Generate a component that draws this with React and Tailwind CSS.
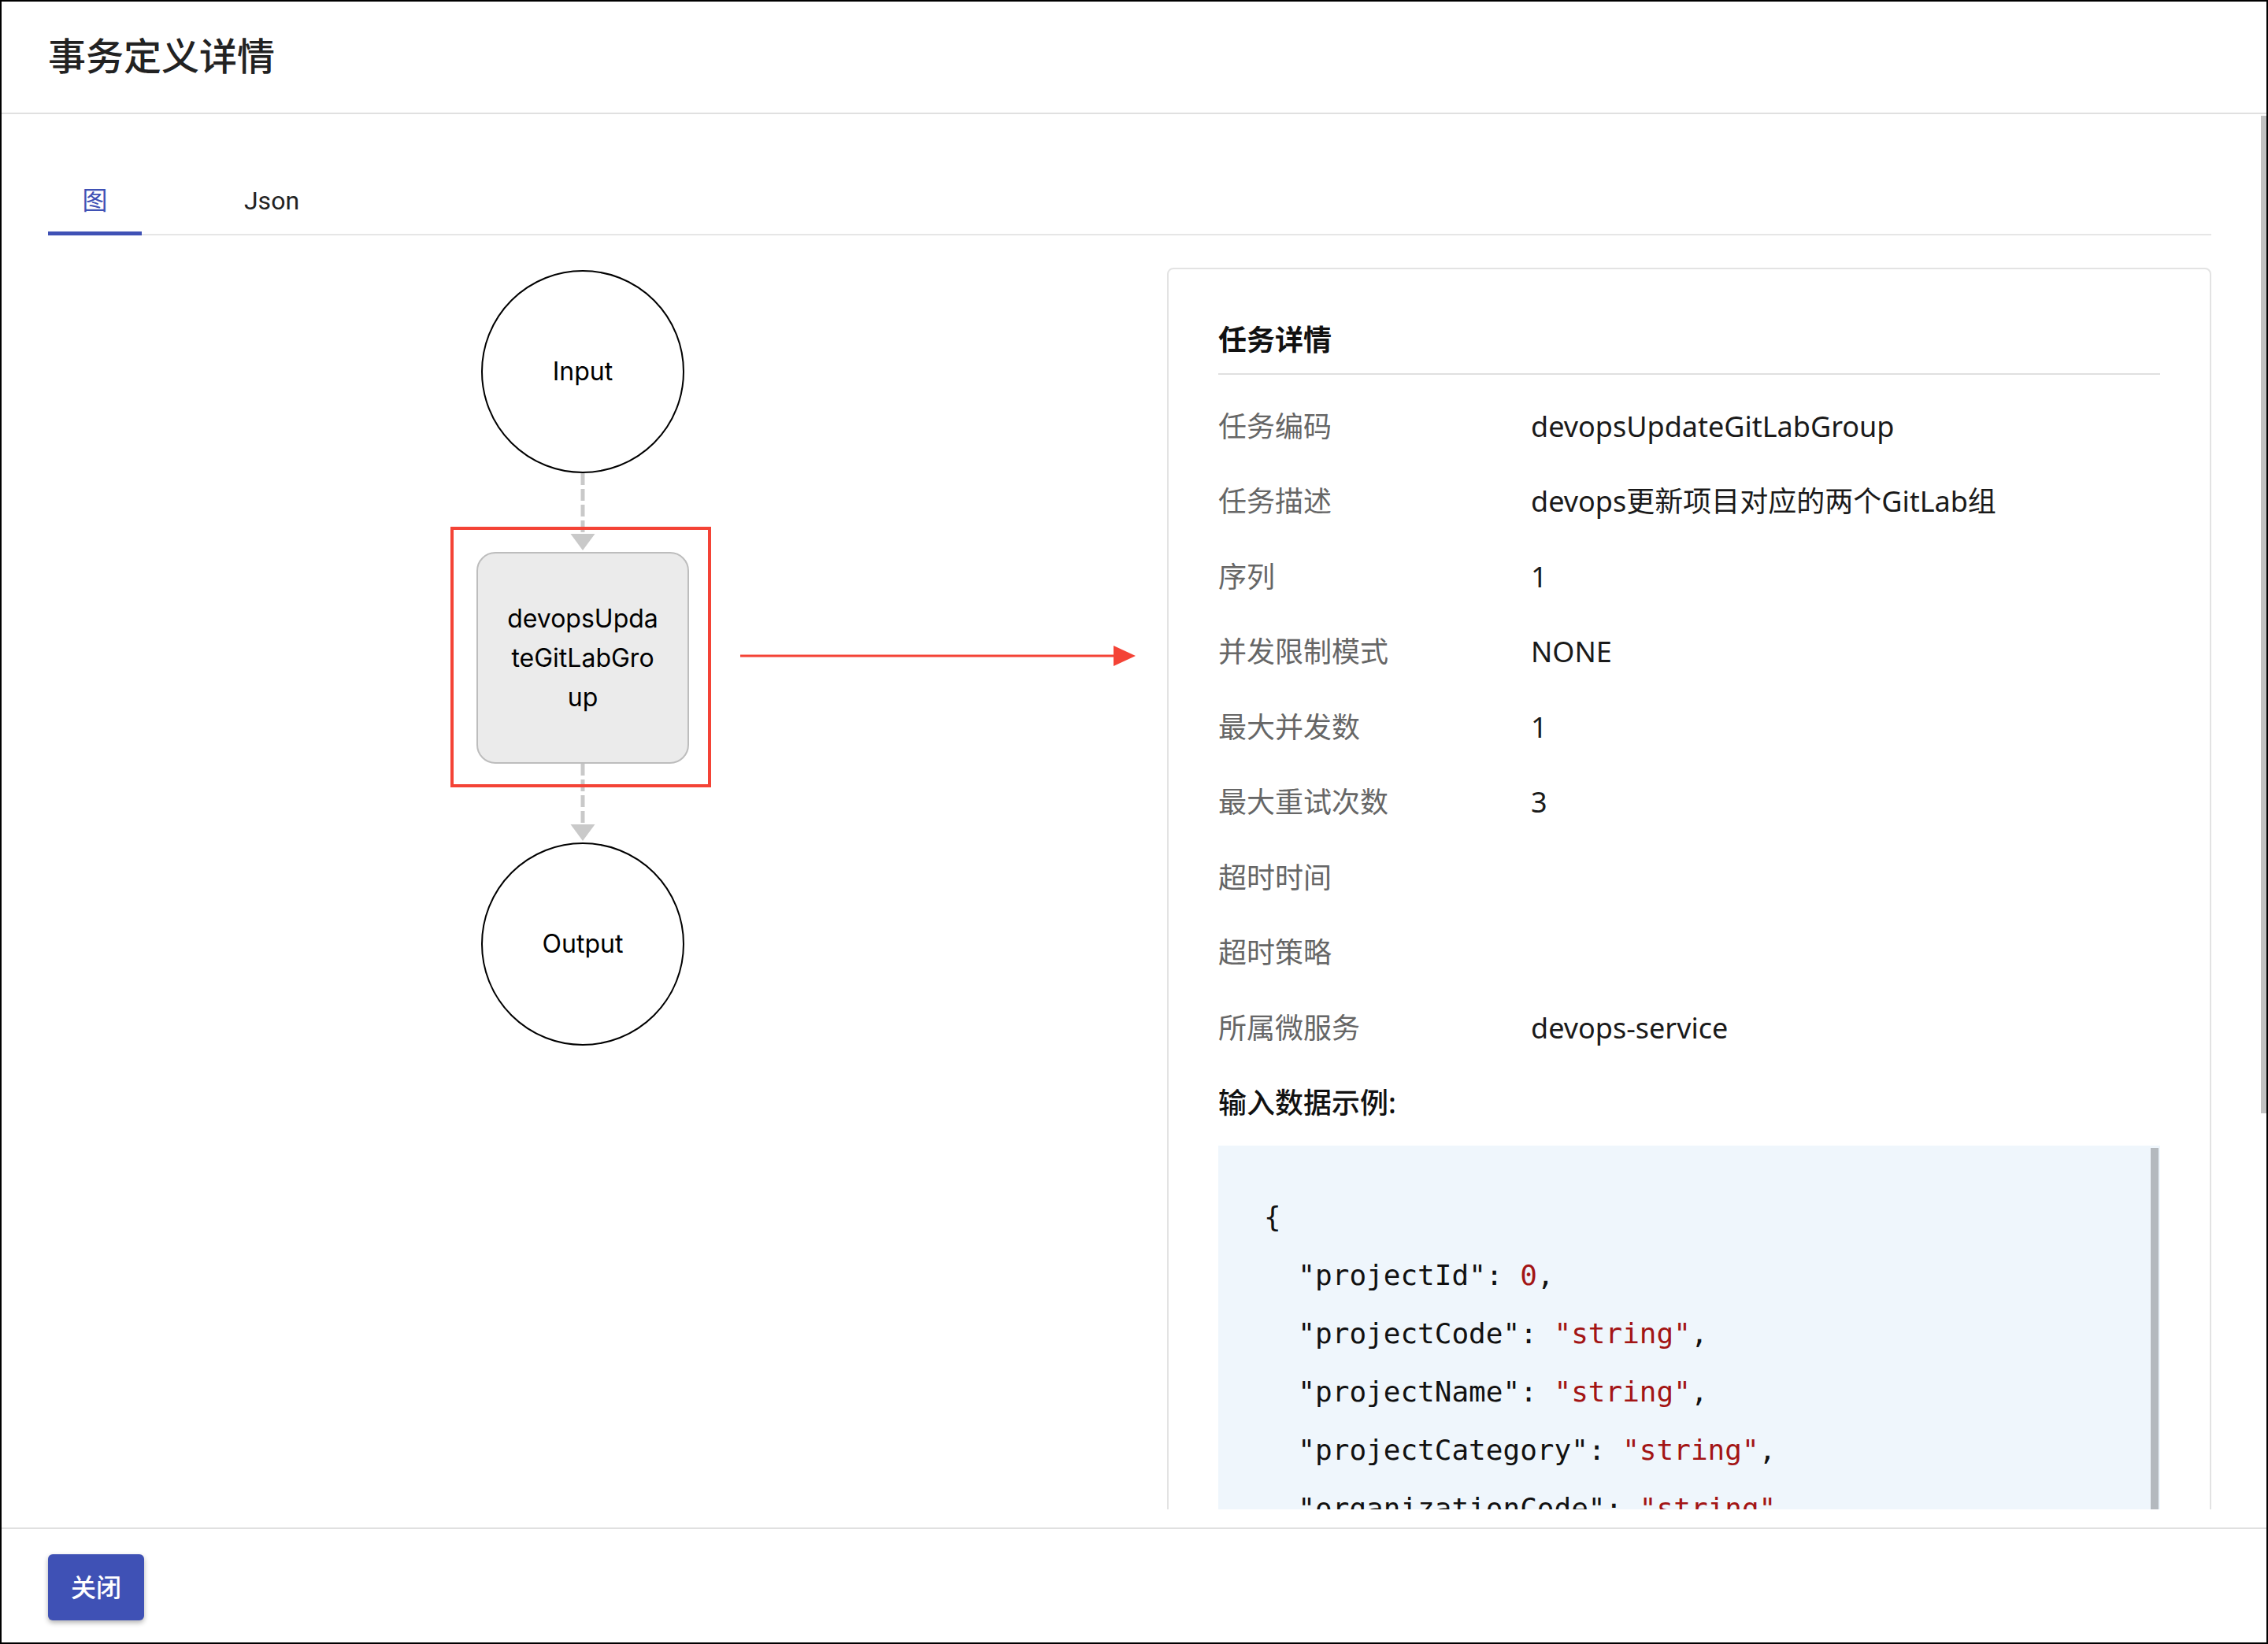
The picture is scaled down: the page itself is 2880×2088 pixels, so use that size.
import React from "react";

const rows = [
  ["任务编码", "devopsUpdateGitLabGroup"],
  ["任务描述", "devops更新项目对应的两个GitLab组"],
  ["序列", "1"],
  ["并发限制模式", "NONE"],
  ["最大并发数", "1"],
  ["最大重试次数", "3"],
  ["超时时间", ""],
  ["超时策略", ""],
  ["所属微服务", "devops-service"],
];

const jsonLines = [
  { key: "projectId", value: "0", last: false },
  { key: "projectCode", value: '"string"', last: false },
  { key: "projectName", value: '"string"', last: false },
  { key: "projectCategory", value: '"string"', last: false },
  { key: "organizationCode", value: '"string"', last: false },
  { key: "organizationName", value: '"string"', last: true },
];

const Connector = () => (
  <svg width="40" height="100" viewBox="0 0 40 100" className="block">
    <line x1="20" y1="0" x2="20" y2="78" stroke="#c9c9c9" strokeWidth="5" strokeDasharray="15 5" />
    <polygon points="4.5,77 35.5,77 20,98" fill="#c9c9c9" />
  </svg>
);

const Circle = ({ label }) => (
  <div className="w-[258px] h-[258px] rounded-full border-2 border-black bg-white flex items-center justify-center font-['Inter',sans-serif] text-[32px] text-black">
    {label}
  </div>
);

const App = () => {
  return (
    <div className="w-[2880px] h-[2088px] bg-white border-2 border-black flex flex-col overflow-hidden font-['Noto_Sans','Noto_Sans_CJK_SC',sans-serif]">
      {/* Header */}
      <div className="h-[143px] shrink-0 border-b-2 border-[#e0e0e0] flex items-center pl-[59px] pb-[4px]">
        <h1 className="text-[48px] font-medium text-[#222] leading-none">事务定义详情</h1>
      </div>

      {/* Main content */}
      <div className="flex-1 min-h-0 relative flex flex-col pb-[23px]">
        <div className="flex-1 min-h-0 overflow-hidden pl-[59px] pr-[70px]">
          {/* Tabs */}
          <div className="mt-[68px] h-[86px] border-b-2 border-[#e6e6e6] flex font-['Roboto','Noto_Sans_CJK_SC',sans-serif] text-[32px]">
            <div className="relative w-[119px] flex items-center justify-center text-[#3f51b5]">
              图
              <div className="absolute left-0 right-0 -bottom-[2px] h-[5px] bg-[#3f51b5]" />
            </div>
            <div className="ml-[84px] w-[162px] flex items-center justify-center text-[#222]">Json</div>
          </div>

          <div className="flex">
            {/* Diagram */}
            <div className="w-[1358px] shrink-0 flex flex-col items-center pt-[44px]">
              <Circle label="Input" />
              <Connector />
              <div className="relative w-[270px] h-[269px] rounded-[24px] border-2 border-[#bdbdbd] bg-[#ebebeb] flex items-center justify-center text-center font-['Inter',sans-serif] text-[32px] leading-[50px] text-black">
                <div>
                  devopsUpda
                  <br />
                  teGitLabGro
                  <br />
                  up
                </div>
                <div className="absolute -left-[35px] -top-[34px] w-[331px] h-[331px] border-4 border-[#f44336]" />
                <svg className="absolute left-[333px] top-[117px]" width="502" height="26" viewBox="0 0 502 26">
                  <line x1="0" y1="13" x2="478" y2="13" stroke="#f44336" strokeWidth="3" />
                  <polygon points="474,0 502,13 474,26" fill="#f44336" />
                </svg>
              </div>
              <Connector />
              <Circle label="Output" />
            </div>

            {/* Task detail panel */}
            <div className="flex-1 ml-[63px] mt-[41px] h-[1700px] border-2 border-[#e3e3e3] rounded-[8px] px-[63px] pt-[66px]">
              <div className="text-[36px] font-bold leading-[48px] pb-[18px] border-b-2 border-[#e0e0e0] text-[#111]">
                任务详情
              </div>
              <div className="mt-[18px] text-[36px]">
                {rows.map(([label, value]) => (
                  <div key={label} className="h-[95.5px] flex items-center">
                    <div className="w-[397px] shrink-0 text-[#666]">{label}</div>
                    <div className="text-[#1a1a1a]">{value}</div>
                  </div>
                ))}
                <div className="h-[95.5px] flex items-center font-medium text-[#111]">输入数据示例:</div>
              </div>

              {/* Json sample */}
              <div className="relative mt-[6px] h-[800px] bg-[#eff6fc] pt-[54px] pl-[58px] font-['DejaVu_Sans_Mono',monospace] text-[36px] leading-[74px] text-[#111] whitespace-pre">
                <div>{"{"}</div>
                {jsonLines.map((line) => (
                  <div key={line.key}>
                    {"  "}"{line.key}": <span className="text-[#a31515]">{line.value}</span>
                    {line.last ? "" : ","}
                  </div>
                ))}
                <div>{"}"}</div>
                <div className="absolute right-[2px] top-[3px] bottom-0 w-[10px] bg-[#b4b9be]" />
              </div>
            </div>
          </div>
        </div>

        {/* Page scrollbar */}
        <div className="absolute right-0 top-[2px] w-[7px] h-[1267px] bg-[#c1c1c1]" />
      </div>

      {/* Footer */}
      <div className="h-[146px] shrink-0 border-t-2 border-[#e0e0e0] pt-[32px] pl-[59px]">
        <button className="w-[122px] h-[84px] rounded-[6px] bg-[#3f51b5] text-white text-[32px] font-medium shadow-[0_3px_6px_rgba(0,0,0,0.3)]">
          关闭
        </button>
      </div>
    </div>
  );
};

export default App;
